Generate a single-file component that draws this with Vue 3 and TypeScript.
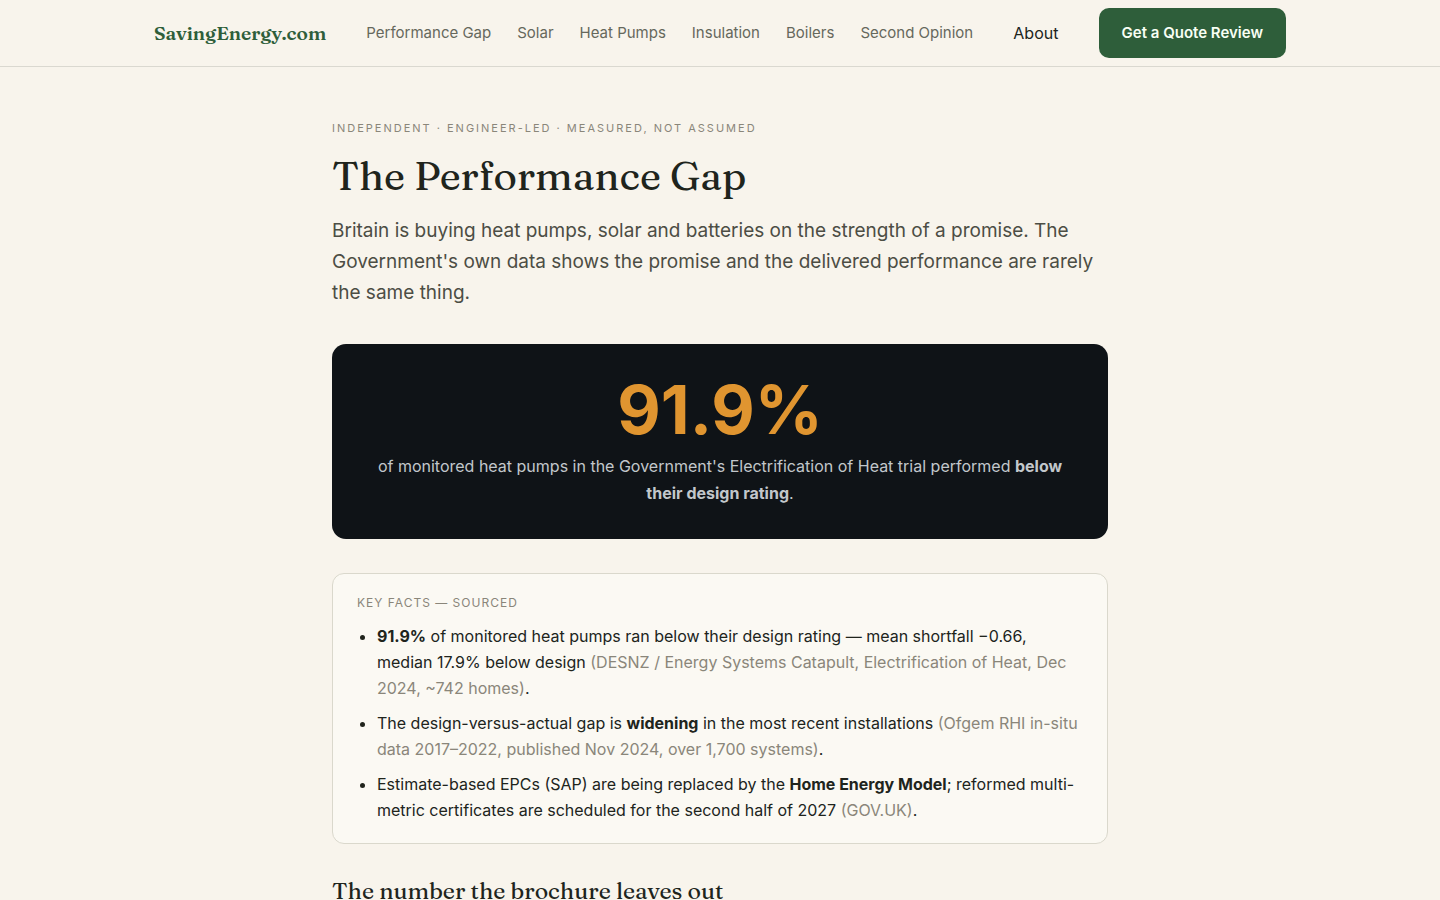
<script setup lang="ts">
interface NavLink {
  label: string
  href: string
}

const links: NavLink[] = [
  { label: 'Performance Gap', href: '#performance-gap' },
  { label: 'Solar', href: '#solar' },
  { label: 'Heat Pumps', href: '#heat-pumps' },
  { label: 'Insulation', href: '#insulation' },
  { label: 'Boilers', href: '#boilers' },
  { label: 'Second Opinion', href: '#second-opinion' },
]
</script>

<template>
  <header class="site-header">
    <div class="bar">
      <a class="brand" href="#">SavingEnergy.com</a>
      <nav class="nav" aria-label="Main">
        <a v-for="link in links" :key="link.href" :href="link.href">{{ link.label }}</a>
      </nav>
      <a class="about" href="#about">About</a>
      <a class="cta" href="#quote">Get a Quote Review</a>
    </div>
  </header>

  <main id="performance-gap" class="article">
    <p class="eyebrow">Independent · Engineer-led · Measured, not assumed</p>
    <h1>The Performance Gap</h1>
    <p class="lede">
      Britain is buying heat pumps, solar and batteries on the strength of a promise. The
      Government's own data shows the promise and the delivered performance are rarely the same
      thing.
    </p>

    <section class="stat">
      <div class="figure">91.9%</div>
      <p>
        of monitored heat pumps in the Government's Electrification of Heat trial performed
        <strong>below their design rating</strong>.
      </p>
    </section>

    <section class="facts">
      <p class="facts-title">Key facts — sourced</p>
      <ul>
        <li>
          <strong>91.9%</strong> of monitored heat pumps ran below their design rating — mean
          shortfall −0.66, median 17.9% below design
          <span class="source">(DESNZ / Energy Systems Catapult, Electrification of Heat, Dec 2024, ~742 homes)</span>.
        </li>
        <li>
          The design-versus-actual gap is <strong>widening</strong> in the most recent
          installations
          <span class="source">(Ofgem RHI in-situ data 2017–2022, published Nov 2024, over 1,700 systems)</span>.
        </li>
        <li>
          Estimate-based EPCs (SAP) are being replaced by the
          <strong>Home Energy Model</strong>; reformed multi-metric certificates are scheduled for
          the second half of 2027 <span class="source">(GOV.UK)</span>.
        </li>
      </ul>
    </section>

    <h2>The number the brochure leaves out</h2>
  </main>
</template>

<style>
html {
  background: #f8f4ec;
}

body {
  margin: 0;
}
</style>

<style scoped>
.site-header,
.article {
  font-family: Inter, "Liberation Sans", sans-serif;
  color: #20241c;
}

.site-header {
  border-bottom: 1px solid #dad8d0;
}

.bar {
  box-sizing: border-box;
  max-width: 1180px;
  min-height: 66px;
  margin: 0 auto;
  padding: 8px 24px;
  display: flex;
  align-items: center;
  justify-content: space-between;
}

.bar a {
  text-decoration: none;
  white-space: nowrap;
}

.brand {
  font-family: Fraunces, "Liberation Serif", serif;
  font-size: 19px;
  line-height: 32px;
  font-weight: 600;
  color: #2e5e3a;
}

.nav {
  display: flex;
  gap: 26px;
}

.nav a {
  font-size: 15px;
  line-height: 26px;
  color: #66685c;
}

.about {
  font-size: 16px;
  color: #20241c;
}

.cta {
  padding: 12px 23px;
  border-radius: 10px;
  background: #2e5e3a;
  color: #f8fff4;
  font-size: 15px;
  line-height: 26px;
  font-weight: 600;
}

.article {
  box-sizing: border-box;
  max-width: 824px;
  margin: 0 auto;
  padding: 51px 24px 0;
}

.eyebrow,
.facts-title {
  margin: 0;
  text-transform: uppercase;
  color: #8a867a;
}

.eyebrow {
  font-size: 11px;
  line-height: 20px;
  letter-spacing: 2px;
}

h1,
h2 {
  font-family: Fraunces, "Liberation Serif", serif;
  font-weight: 400;
}

h1 {
  margin: 12px 0 13px;
  font-size: 40px;
  line-height: 52px;
}

.lede {
  margin: 0;
  font-size: 19px;
  line-height: 31px;
  color: #4c4d44;
}

.stat {
  margin-top: 36px;
  padding: 32px 28px;
  border-radius: 14px;
  background: #0f1317;
  color: #c2c7cb;
  text-align: center;
}

.figure {
  font-size: 67px;
  line-height: 67px;
  font-weight: 700;
  color: #e09530;
}

.stat p {
  margin: 10px 0 0;
  font-size: 16px;
  line-height: 27px;
}

.facts {
  margin-top: 34px;
  padding: 20px 24px;
  border: 1px solid #dad8cc;
  border-radius: 12px;
  background: #fbf9f3;
}

.facts-title {
  font-size: 12px;
  line-height: 18px;
  letter-spacing: 1px;
}

.facts ul {
  margin: 11px 0 0;
  padding-left: 20px;
}

.facts li {
  margin-bottom: 9px;
  font-size: 16px;
  line-height: 26px;
}

.facts li:last-child {
  margin-bottom: 0;
}

.source {
  color: #8a867a;
}

h2 {
  margin: 31px 0 0;
  font-size: 23px;
  line-height: 32px;
}
</style>
